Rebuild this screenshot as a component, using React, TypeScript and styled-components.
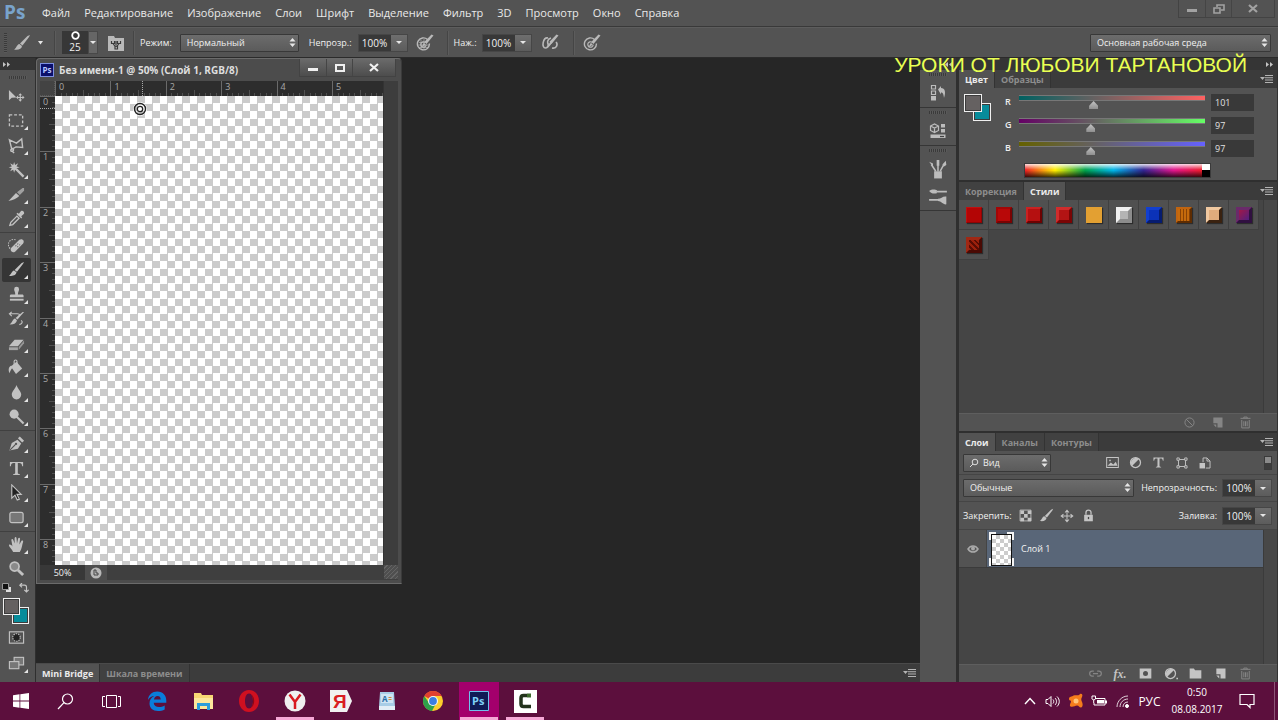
import React, { useState } from "react";
import styled, { createGlobalStyle } from "styled-components";

const GlobalStyle = createGlobalStyle`
  * { box-sizing: border-box; }
  body { margin: 0; background: #262626; }
  button, input, select { font: inherit; color: inherit; margin: 0; padding: 0; }
  button { background: none; border: 0; cursor: default; }
`;

const uiFont = `"Open Sans", "Noto Sans", sans-serif`;

/* ---------- shell ---------- */

const Screen = styled.div`
  position: relative;
  display: flex;
  flex-direction: column;
  min-height: 100vh;
  font-family: ${uiFont};
  font-size: 9px;
  color: #e2e2e2;
  background: #535353;
  overflow: hidden;
`;

const MenuBar = styled.header`
  display: flex;
  height: 27px;
  padding-right: 3px;
  background: #535353;
  border-bottom: 1px solid #393939;
`;

const Logo = styled.div`
  width: 35px;
  padding-left: 4px;
  font: bold 19px/25px "Open Sans", sans-serif;
  color: #79a3cb;
`;

const MenuNav = styled.nav`
  display: flex;
  flex: 1;
`;

const MenuItem = styled.button`
  padding: 0 7px;
  font-size: 11px;
  line-height: 26px;
  color: #e9e9e9;
`;

const WindowButtons = styled.div`
  display: flex;
  align-self: flex-start;
  border: 1px solid #434343;
  border-top: 0;
`;

const WindowButton = styled.button<{ $wide?: boolean; $raised?: boolean }>`
  display: grid;
  place-items: center;
  width: ${(p) => (p.$wide ? 43 : 26)}px;
  height: 17px;
  color: ${(p) => (p.$raised ? "#f0f0f0" : "#a2a2a2")};
  background: ${(p) => (p.$raised ? "linear-gradient(#6a6a6a, #4d4d4d)" : "none")};
  & + & { border-left: 1px solid #454545; }
`;

const OptionsBar = styled.div`
  display: flex;
  align-items: center;
  height: 31px;
  padding: 0 7px 0 4px;
  border-top: 1px solid #5d5d5d;
  border-bottom: 1px solid #2b2b2b;
`;

const Grip = styled.div<{ $vertical?: boolean; $length: number }>`
  flex: none;
  width: ${(p) => (p.$vertical ? 3 : p.$length)}px;
  height: ${(p) => (p.$vertical ? p.$length : 3)}px;
  background: repeating-linear-gradient(${(p) => (p.$vertical ? "180deg" : "90deg")}, #3a3a3a 0 1px, #5a5a5a 1px 2px);
`;

const Divider = styled.div`
  width: 2px;
  height: 24px;
  margin: 0 5px;
  background: #454545;
  border-right: 1px solid #5c5c5c;
`;

const BarButton = styled.button<{ $width?: number }>`
  display: grid;
  place-items: center;
  width: ${(p) => p.$width ?? 24}px;
  height: 24px;
  color: #b9b9b9;
`;

const BrushPreset = styled.button`
  display: flex;
  width: 36px;
  height: 23px;
  margin: 0 6px 0 1px;
  background: #373737;
  color: #f0f0f0;
  font-size: 10px;
  line-height: 10px;
`;

const BrushFace = styled.span`
  display: flex;
  flex: 1;
  flex-direction: column;
  align-items: center;
  gap: 2px;
`;

const ArrowCap = styled.span`
  display: grid;
  place-items: center;
  width: 10px;
  height: 100%;
  background: #666;
  border: 1px solid #484848;
`;

const Spacer = styled.div`
  flex: 1;
`;

const FieldLabel = styled.label<{ $before?: number; $gap?: number }>`
  margin-left: ${(p) => p.$before ?? 0}px;
  margin-right: ${(p) => p.$gap ?? 6}px;
  font-weight: 500;
  line-height: 14px;
  color: #f0f0f0;
  white-space: nowrap;
`;

const SelectShell = styled.div<{ $width?: number; $grow?: boolean; $icon?: boolean }>`
  position: relative;
  flex: ${(p) => (p.$grow ? "1 1 0" : "none")};
  width: ${(p) => (p.$width ? p.$width + "px" : "auto")};
  height: 18px;
  select {
    width: 100%;
    height: 18px;
    appearance: none;
    padding-left: ${(p) => (p.$icon ? 19 : 6)}px;
    color: #f0f0f0;
    background: linear-gradient(#6c6c6c, #5b5b5b);
    border: 1px solid #383838;
    border-radius: 1px;
    font-size: 9px;
    font-weight: 500;
    line-height: 14px;
  }
  svg { position: absolute; pointer-events: none; }
  .arrows { right: 3px; top: 4px; }
  .lens { left: 6px; top: 4px; }
`;

const NumberShell = styled.div`
  display: flex;
  flex: none;
  height: 18px;
  border: 1px solid #464646;
  input {
    width: 32px;
    border: 0;
    background: #383838;
    color: #f2f2f2;
    font-size: 10px;
    text-align: center;
  }
  button {
    display: grid;
    place-items: center;
    width: 16px;
    background: linear-gradient(#6e6e6e, #5c5c5c);
    color: #eee;
  }
`;

const Body = styled.div`
  display: flex;
  flex: 1;
  min-height: 620px;
  background: #2f2f2f;
`;

/* ---------- tools ---------- */

const Strip = styled.aside<{ $width: number }>`
  display: flex;
  flex: none;
  flex-direction: column;
  width: ${(p) => p.$width}px;
  background: #535353;
`;

const StripHead = styled.div<{ $end?: boolean }>`
  display: flex;
  align-items: center;
  justify-content: ${(p) => (p.$end ? "flex-end" : "flex-start")};
  height: 12px;
  padding: 0 4px 0 3px;
  background: #353535;
  color: #b8b8b8;
`;

const GripRow = styled.div<{ $height: number }>`
  display: grid;
  place-items: center;
  height: ${(p) => p.$height}px;
`;

const ToolGroup = styled.div<{ $height: number }>`
  display: flex;
  flex-direction: column;
  height: ${(p) => p.$height}px;
  & + & {
    margin-top: 2px;
    box-shadow: 0 -1px 0 #404040;
  }
`;

const Tool = styled.button<{ $active?: boolean }>`
  position: relative;
  display: grid;
  place-items: center;
  flex: 1;
  width: 29px;
  margin-left: 2px;
  color: #c2c2c2;
  border-radius: 2px;
  background: ${(p) => (p.$active ? "#353535" : "none")};
`;

const Corner = styled.i`
  position: absolute;
  right: 3px;
  bottom: 3px;
  border: 2px solid transparent;
  border-right-color: #e4e4e4;
  border-bottom-color: #e4e4e4;
`;

const SwapRow = styled.div`
  display: flex;
  justify-content: space-between;
  height: 16px;
  padding: 2px 6px 0 2px;
`;

const SwatchPair = styled.div<{ $size: number; $w: number; $h: number }>`
  position: relative;
  width: ${(p) => p.$w}px;
  height: ${(p) => p.$h}px;
  button {
    position: absolute;
    width: ${(p) => p.$size}px;
    height: ${(p) => p.$size}px;
    border: 1px solid #f0f0f0;
    outline: 1px solid #3c3c3c;
    outline-offset: -2px;
  }
  .back { right: 0; bottom: 0; background: #078c9b; }
  .front { left: 0; top: 0; background: #656161; }
`;

const ToolSwatches = styled.div`
  padding: 1px 0 0 3px;
`;

/* ---------- workspace ---------- */

const Work = styled.main`
  position: relative;
  display: flex;
  flex: 1;
  flex-direction: column;
  min-width: 0;
  margin-left: 1px;
  background: #262626;
`;

const Stage = styled.div`
  flex: 1;
`;

const BottomTabs = styled.div`
  display: flex;
  height: 19px;
  background: #3c3c3c;
  border-top: 1px solid #4a4a4a;
`;

const DocWindow = styled.section`
  position: absolute;
  left: 0;
  top: 0;
  width: 366px;
  padding: 0 3px 3px;
  border: 1px solid #6b6b6b;
  border-right-color: #3a3a3a;
  border-radius: 4px 4px 0 0;
  background: #4c4c4c;
`;

const DocTitle = styled.div`
  display: flex;
  height: 22px;
  padding-right: 2px;
  font-size: 10px;
  font-weight: bold;
  line-height: 22px;
  color: #dedede;
  white-space: nowrap;
`;

const DocBadge = styled.span`
  width: 14px;
  height: 14px;
  margin: 4px 5px 0 0;
  border: 1px solid #7d8fe0;
  background: #0a0f6b;
  color: #b9c8ff;
  font: bold 8px/12px ${uiFont};
  text-align: center;
`;

const DocGrid = styled.div`
  display: grid;
  grid-template-columns: 15px 328px 1fr;
  grid-template-rows: 15px 469px 15px;
  background: #2d2d2d;
`;

const RulerCorner = styled.div`
  background: #434343;
  border-right: 1px dotted #5a5a5a;
  border-bottom: 1px dotted #5a5a5a;
`;

const ScrollTrack = styled.div`
  background: #3d3d3d;
  border-left: 1px solid #333;
`;

const Canvas = styled.div`
  position: relative;
  background: repeating-conic-gradient(#cbcbcb 0 25%, #ffffff 0 50%) 0 0 / 15px 15px;
  svg { position: absolute; left: 78px; top: 6px; }
`;

const DocStatus = styled.div`
  display: flex;
  grid-column: 1 / -1;
  background: #3f3f3f;
  color: #f0f0f0;
  line-height: 15px;
`;

const Zoom = styled.input`
  width: 45px;
  border: 0;
  background: #383838;
  font-weight: 500;
  text-align: center;
`;

const StatusButton = styled.button`
  display: grid;
  place-items: center;
  width: 22px;
  background: #4e4e4e;
`;

const ResizeCorner = styled.div`
  width: 14px;
  height: 14px;
  background: repeating-linear-gradient(135deg, #4f4f4f 0 2px, #656565 2px 3px);
`;

/* ---------- docks ---------- */

const DockGroup = styled.div<{ $height: number }>`
  display: flex;
  flex-direction: column;
  align-items: center;
  height: ${(p) => p.$height}px;
  border-bottom: 1px solid #363636;
`;

const DockButton = styled.button`
  display: grid;
  place-items: center;
  width: 30px;
  height: 27px;
  color: #bcbcbc;
`;

const Panels = styled.aside`
  display: flex;
  flex: none;
  flex-direction: column;
  width: 319px;
  margin-left: 3px;
  border-right: 1px solid #333;
  background: #2f2f2f;
`;

const PanelGap = styled.div`
  height: 2px;
`;

const TabRow = styled.div`
  display: flex;
  height: 18px;
  background: #3b3b3b;
`;

const Tab = styled.button<{ $active?: boolean }>`
  padding: 0 6px;
  font-size: 9px;
  font-weight: bold;
  line-height: 17px;
  color: ${(p) => (p.$active ? "#ebebeb" : "#8d8d8d")};
  background: ${(p) => (p.$active ? "#535353" : "#414141")};
  border-right: 1px solid #333;
  white-space: nowrap;
`;

const PanelMenu = styled.button`
  display: grid;
  place-items: center;
  width: 22px;
  margin-left: auto;
  color: #cfcfcf;
`;

const ColorPanel = styled.div`
  display: grid;
  grid-template-columns: 41px 1fr;
  height: 92px;
  padding: 6px 0 0 5px;
  background: #535353;
`;

const Channels = styled.div`
  display: flex;
  flex-direction: column;
  gap: 7px;
`;

const Channel = styled.div`
  display: flex;
  height: 16px;
  label { width: 10px; line-height: 16px; color: #eee; font-weight: 600; }
  input[type="text"] {
    width: 43px;
    height: 17px;
    margin-left: 6px;
    padding-left: 4px;
    border: 0;
    background: #393939;
    font-weight: 500;
  }
`;

const Slider = styled.input<{ $from: string; $to: string }>`
  appearance: none;
  width: 186px;
  height: 16px;
  background: none;
  &::-webkit-slider-runnable-track {
    height: 16px;
    background: linear-gradient(90deg, ${(p) => p.$from}, #656161 40%, ${(p) => p.$to}) 0 2px / 100% 4px no-repeat,
      linear-gradient(#777, #777) 0 1px / 100% 6px no-repeat;
  }
  &::-webkit-slider-thumb {
    appearance: none;
    width: 9px;
    height: 8px;
    margin-top: 7px;
    background: linear-gradient(#c4c4c4, #8f8f8f);
    clip-path: polygon(50% 0, 100% 60%, 100% 100%, 0 100%, 0 60%);
  }
`;

const SliderSlot = styled.div`
  width: 186px;
  margin-left: 4px;
`;

const Spectrum = styled.div`
  display: flex;
  width: 187px;
  height: 15px;
  margin-left: 19px;
  border: 1px solid #3b3b3b;
`;

const Hues = styled.div`
  flex: 1;
  background: linear-gradient(rgba(255, 255, 255, 0.85), rgba(255, 255, 255, 0) 45%, rgba(0, 0, 0, 0) 50%, rgba(0, 0, 0, 0.75)),
    linear-gradient(90deg, #ee2024, #ffee00 17%, #00a14b 34%, #00b4e8 50%, #32248f 67%, #e0168c 84%, #ee1c2c);
`;

const BlackWhite = styled.div`
  width: 8px;
  background: linear-gradient(#fff 50%, #000 0);
`;

const StylesPanel = styled.div`
  display: flex;
  flex: 1 1 200px;
  min-height: 0;
  background: #454545;
`;

const StyleGrid = styled.div`
  display: grid;
  flex: 1;
  grid-template-columns: repeat(10, 30px);
  grid-auto-rows: 30px;
  align-content: start;
`;

const StyleCell = styled.button`
  display: grid;
  place-items: center;
  background: #505050;
  border-right: 1px solid #404040;
  border-bottom: 1px solid #404040;
`;

const StyleChip = styled.span<{ $fill: string; $hi: string; $lo: string; $bevel: number }>`
  width: 16px;
  height: 16px;
  border: ${(p) => p.$bevel}px solid;
  border-color: ${(p) => `${p.$hi} ${p.$lo} ${p.$lo} ${p.$hi}`};
  background: ${(p) => p.$fill};
  box-shadow: 1px 1px 1px rgba(0, 0, 0, 0.45);
`;

const ScrollStrip = styled.div`
  width: 14px;
  background: #484848;
  border-left: 1px solid #3b3b3b;
`;

const PanelFoot = styled.div<{ $gap: number }>`
  display: flex;
  align-items: center;
  justify-content: flex-end;
  gap: ${(p) => p.$gap}px;
  height: 18px;
  padding-right: 24px;
  border-top: 1px solid #5e5e5e;
  background: #535353;
`;

const FootButton = styled.button<{ $dim?: boolean }>`
  display: grid;
  place-items: center;
  width: 16px;
  height: 16px;
  color: ${(p) => (p.$dim ? "#858585" : "#c4c4c4")};
  font: italic bold 12px/16px "Liberation Serif", serif;
`;

const Row = styled.div<{ $height: number }>`
  display: flex;
  align-items: center;
  height: ${(p) => p.$height}px;
  padding: 0 5px 0 4px;
  background: #535353;
  border-bottom: 1px solid #454545;
`;

const FilterButtons = styled.div<{ $start: number }>`
  display: flex;
  margin-left: ${(p) => p.$start}px;
`;

const SmallButton = styled.button<{ $width: number }>`
  display: grid;
  place-items: center;
  width: ${(p) => p.$width}px;
  height: 18px;
  color: #c4c4c4;
`;

const FilterSwitch = styled.button`
  width: 8px;
  height: 14px;
  border: 1px solid #3a3a3a;
  background: linear-gradient(#8a8a8a 50%, #3c3c3c 0);
`;

const Layers = styled.div`
  display: flex;
  flex: 1 1 121px;
  min-height: 0;
  background: #454545;
`;

const LayerList = styled.div`
  flex: 1;
`;

const LayerRow = styled.div`
  display: flex;
  height: 38px;
  border-bottom: 1px solid #3b3b3b;
`;

const EyeButton = styled.button`
  display: grid;
  place-items: center;
  width: 28px;
  background: #535353;
  border-right: 1px solid #444;
  color: #a9a9a9;
`;

const LayerBody = styled.button`
  display: flex;
  flex: 1;
  align-items: center;
  gap: 7px;
  padding-left: 2px;
  background: #596678;
  color: #f2f2f2;
  font-weight: 500;
`;

const LayerThumb = styled.span`
  position: relative;
  display: block;
  width: 25px;
  height: 34px;
  padding: 2px;
  background:
    linear-gradient(#596678, #596678) 50% 0 / 11px 100% no-repeat,
    linear-gradient(#596678, #596678) 0 50% / 100% 18px no-repeat,
    #f5f5f5;
  &::before {
    content: "";
    display: block;
    height: 30px;
    border: 1px solid #111;
    background: repeating-conic-gradient(#ccc 0 25%, #fff 0 50%) 0 0 / 8px 8px;
  }
`;

/* ---------- caption & taskbar ---------- */

const Caption = styled.div`
  position: absolute;
  right: 31px;
  top: 53px;
  font: 21px/24px "Liberation Sans", sans-serif;
  color: #e9ff52;
  white-space: nowrap;
`;

const Taskbar = styled.footer`
  display: flex;
  height: 38px;
  background: #5c0f3d;
  color: #fff;
`;

const TaskButton = styled.button<{ $first?: boolean; $running?: boolean; $active?: boolean }>`
  display: grid;
  place-items: center;
  width: ${(p) => (p.$first ? 42 : 46)}px;
  background:
    linear-gradient(${(p) => (p.$running ? "#f5a8d6, #f5a8d6" : "transparent, transparent")}) 50% 100% / 38px 3px no-repeat,
    linear-gradient(${(p) => (p.$active ? "#a3006c, #a3006c" : "transparent, transparent")}) 50% 0 / 40px 100% no-repeat;
`;

const Tray = styled.div`
  display: flex;
  align-items: center;
  margin-left: auto;
  padding-right: 3px;
`;

const TrayButton = styled.button<{ $width: number }>`
  display: grid;
  place-items: center;
  width: ${(p) => p.$width}px;
  height: 38px;
  font-size: 12px;
`;

const Clock = styled.button`
  width: 64px;
  font-size: 10px;
  line-height: 17px;
  text-align: center;
`;

const DesktopEdge = styled.div`
  align-self: stretch;
  width: 1px;
  background: #8d5577;
`;

/* ---------- drawings ---------- */

const Icon = ({ children, size = 18, box = 18 }: { children: React.ReactNode; size?: number; box?: number }) => (
  <svg width={size} height={size} viewBox={`0 0 ${box} ${box}`} fill="none" stroke="currentColor" strokeWidth="1.2" aria-hidden="true">
    {children}
  </svg>
);
const F = { fill: "currentColor", stroke: "none" };

const brushShape = (
  <g {...F}>
    <path d="M17 1 16 3 9.500 11.500 7 9.500 14.500 2z" />
    <path d="M6.400 10 9 12c-.3 3-3.500 4.300-8 3.600C3.500 14.500 3.600 10.600 6.400 10z" />
  </g>
);
const thinBrush = <g {...F}><path d="M17.500 1.500 10.500 10 8.300 8 15.500 .5z" /><path d="M7.800 8.800 9.800 10.800 5.500 13.200z" /></g>;

const Caret = () => <svg width="6" height="3" viewBox="0 0 6 3" aria-hidden="true"><path d="M0 0h6L3 3z" fill="#e6e6e6" /></svg>;
const Arrows = () => <svg className="arrows" width="7" height="9" viewBox="0 0 7 9" aria-hidden="true"><path d="M3.500 0 6.500 3.500h-6zM3.500 9l3-3.500h-6z" fill="#e6e6e6" /></svg>;
const Chevrons = ({ flip }: { flip?: boolean }) => (
  <svg width="7" height="5" viewBox="0 0 7 5" aria-hidden="true"><path d={flip ? "M3 0v5L0 2.500zM7 0v5L4 2.500z" : "M0 0v5l3-2.500zM4 0v5l3-2.500z"} fill="#c4c4c4" /></svg>
);
const MenuGlyph = () => (
  <svg width="13" height="8" viewBox="0 0 13 8" aria-hidden="true"><path d="M0 2h5L2.500 5zM5 0h8v1H5zM5 2.300h8v1H5zM5 4.600h8v1H5zM5 7h8v1H5z" fill="#b4b4b4" /></svg>
);

const toolIcons: Record<string, React.ReactNode> = {
  move: <g {...F}><path d="M1 2v11l3-2.600L9 10z" /><path d="m13 5.500 2 2.200h-1.400V9.400h1.700V8l2.200 2-2.200 2v-1.400h-1.700v1.700H15l-2 2.200-2-2.200h1.400v-1.700h-1.700V12L8.500 10l2.200-2v1.400h1.700V7.700H11z" /></g>,
  marquee: <rect x="1.500" y="3" width="14" height="12" strokeDasharray="3 2" strokeWidth="1.400" />,
  lasso: <path d="M1.500 3 9 6.500 14.500 2l1 9-7-.5-4.500 2.500z M4 12.500c-2 1-1 3.500 1 2.300s0-3-1-2.300zM4.500 15l2 2" strokeWidth="1.500" />,
  wand: <g><path d="m8.500 8.500 8 8" strokeWidth="2.500" /><path d="m6.500 1 1 3.300L10.700 2.500 9 5.700l3.300 1L9 7.700l1.700 3.200L7.500 9.200l-1 3.300-1-3.300-3.200 1.700L4 7.700l-3.300-1L4 5.700 2.300 2.500l3.200 1.800z" {...F} /></g>,
  slice: <g {...F}><path d="M.5 16 8.500 7.500l3.500 3C9 13 5 15 .5 16z" /><path d="m9.500 6.500 6-4.500h1.500v3L12.500 9.500z" opacity=".7" /></g>,
  dropper: <g><path d="M2 16.200 3 13l6.500-6.500 2.200 2.200L5 15.400z" strokeWidth="1.400" /><path d="m9 4 5 5 1-1-1-1.500L17 4c.7-2-1.300-4-3.200-3L11.500 4 10 3z" {...F} /></g>,
  heal: <g><path d="M8 3a5.500 5.500 0 1 0-3 10.500" strokeDasharray="1.500 1.200" /><path d="M3.500 11.500 12 3c3-2 6 1 4 4l-8.500 8.500c-3 2-6-1-4-4z" {...F} /><path d="m8 9 .7.7M10 7l.7.7M10 10l.7.7M12 8l.7.7" stroke="#535353" /></g>,
  brush: brushShape,
  stamp: <g {...F}><path d="M6.500 3.500a2.600 2.600 0 0 1 5.200 0c0 2-1.200 2.500-1.200 5.500H15c1 0 1.500.6 1.500 1.500V12H2v-1.500C2 9.600 2.500 9 3.500 9h4.200c0-3-1.200-3.500-1.200-5.500z" /><path d="M2 13.500h14.500V15.500H2z" /></g>,
  history: <g><path d="M2 4h8M4 2 1.500 4 4 6.500M10 4c3 0 3 2 .5 3M14 11c2 1.500 1 3.500-2 4.500" /><path d="m17 2-7 8-2-1.600L15.500 2z" {...F} /><path d="m7.500 9 2 1.800C9 14 6 15.500 1.500 15.200 5 13.500 4.500 9.500 7.500 9z" {...F} /></g>,
  eraser: <g {...F}><path d="M1 12 7 5h9.500l-6 7z" /><path d="M1 13h9.500v3H1z" opacity=".75" /><path d="m11.300 12.800 5.700-7v3L11.300 16z" opacity=".6" /></g>,
  bucket: <g><path d="m3 8 6-5 6 7-6.500 6z" {...F} /><path d="M6.500 7V2.500c0-2 3-2 3 0V6" /><path d="M3.500 7C0 9 .5 12 1.500 15c1-2 1.500-4 3-5.500z" {...F} /></g>,
  blur: <path d="M9 1c1 4 5 6.500 5 10.200A5 5 0 0 1 9 16.300a5 5 0 0 1-5-5.100C4 7.500 8 5 9 1z" {...F} />,
  dodge: <g><circle cx="6.500" cy="6.500" r="4.800" {...F} /><path d="m9.500 9.500 7 7" strokeWidth="2.200" /></g>,
  pen: <g><path d="M1.500 16.500 4 8.500l6-3.500 4 4-3.500 5.500z" {...F} /><path d="m10.500 3.500 2-2 4.500 4.500-2 2z" {...F} /><path d="m2 16 6-6" stroke="#535353" /><circle cx="8.500" cy="9.500" r="1.200" fill="#535353" stroke="none" /></g>,
  type: <path d="M2 2h14v4.500h-1C14.600 4 14 3.300 12 3.300h-1.600v10.200c0 1.200.6 1.400 2.200 1.600V16H5.400v-.9c1.600-.2 2.200-.4 2.200-1.600V3.300H6C4 3.300 3.400 4 3 6.500H2z" {...F} />,
  arrow: <path d="M4 1v14l3.400-3.200L9.800 17l2.200-1-2.500-5H14z" fill="#222" strokeWidth="1.200" />,
  shape: <rect x="2" y="3.500" width="14" height="11" rx="2" fill="#777" strokeWidth="1.300" />,
  hand: <path d="M5.500 17C4 13.500 1 11.500 1 9.500c1-1 2.500 0 3.700 1.500L3.500 4c.6-1.300 1.700-1 2 0L7 8V2c.5-1.300 1.700-1.300 2 0l.5 6 1.300-5.500c.6-1.200 1.800-.8 2 .3L12 9l2.300-4c1-.8 2 0 1.700 1-1 3-1.200 7.500-3.500 11z" {...F} />,
  zoom: <g><circle cx="7" cy="7" r="4.700" fill="#8a8a8a" strokeWidth="1.800" /><path d="m10.500 10.500 5.500 5.500" strokeWidth="3" /></g>,
};

const toolGroups: { height: number; tools: [string, string][] }[] = [
  { height: 147, tools: [["move", "Перемещение"], ["marquee", "Область"], ["lasso", "Лассо"], ["wand", "Волшебная палочка"], ["slice", "Раскройка"], ["dropper", "Пипетка"]] },
  { height: 196, tools: [["heal", "Восстанавливающая кисть"], ["brush", "Кисть"], ["stamp", "Штамп"], ["history", "Архивная кисть"], ["eraser", "Ластик"], ["bucket", "Заливка"], ["blur", "Размытие"], ["dodge", "Осветлитель"]] },
  { height: 99, tools: [["pen", "Перо"], ["type", "Текст"], ["arrow", "Выделение контура"], ["shape", "Фигура"]] },
  { height: 49, tools: [["hand", "Рука"], ["zoom", "Масштаб"]] },
];

const trashIcon = <path d="M4.500 6v9.500h9V6M3 4h12M7 4V2.500h4V4M7 7.500v6M9 7.500v6M11 7.500v6" />;
const newIcon = <g {...F}><path d="M4 3h11v12h-6v-5H4z" /><path d="M4 11.500h3.500V15z" /></g>;
const circleHalf = <g><circle cx="9" cy="9" r="6" strokeWidth="1.500" /><path d="M4.800 13.200A6 6 0 0 1 13.200 4.800z" {...F} /></g>;
const targetPen = <g><path d="M11.500 5.500A6 6 0 1 0 13.400 9.500" strokeWidth="1.400" /><path d="M9 8.200a2.700 2.700 0 1 0 1.200 2.500" />{thinBrush}</g>;

const MinGlyph = () => <svg width="10" height="9" viewBox="0 0 10 9" aria-hidden="true"><path d="M0 5h10v3H0z" fill="currentColor" /></svg>;
const MaxGlyph = () => <svg width="10" height="8" viewBox="0 0 10 8" aria-hidden="true"><path d="M1 1h8v6H1z" fill="none" stroke="currentColor" strokeWidth="2" /></svg>;
const RestoreGlyph = () => <svg width="12" height="10" viewBox="0 0 12 10" aria-hidden="true"><path d="M4 3V1h7v5H8M1 4h6v5H1z" fill="none" stroke="currentColor" strokeWidth="1.600" /></svg>;
const CloseGlyph = () => <svg width="10" height="9" viewBox="0 0 10 9" aria-hidden="true"><path d="m1 1 8 7M9 1 1 8" stroke="currentColor" strokeWidth="2.200" /></svg>;

const UNIT = 55.4;

const Ruler = ({ vertical, length }: { vertical?: boolean; length: number }) => {
  const ticks = Array.from({ length: Math.floor((length / UNIT) * 10) + 1 }, (_, i) => i);
  const labels = Array.from({ length: Math.floor(length / UNIT) + 1 }, (_, i) => i);
  return (
    <svg width={vertical ? 15 : length} height={vertical ? length : 15} shapeRendering="crispEdges" aria-hidden="true">
      {ticks.map((i) => {
        const at = Math.round((i * UNIT) / 10) + 0.5;
        const size = i % 10 === 0 ? 15 : i % 5 === 0 ? 6 : 3;
        const d = vertical ? `M${15 - size} ${at}H15` : `M${at} ${15 - size}V15`;
        return <path key={i} d={d} stroke={i % 10 === 0 ? "#6a6a6a" : "#505050"} />;
      })}
      <path d={vertical ? "M0 12.500H15" : "M87.500 0V15"} stroke="#aaa" strokeDasharray="1 1" />
      {labels.map((n) => (
        <text key={n} x={vertical ? 3 : n * UNIT + 4} y={vertical ? n * UNIT + 9 : 9} fontSize="9" fill="#a9a9a9">{n}</text>
      ))}
    </svg>
  );
};

/* ---------- controls ---------- */

const Select = ({ id, label, value, width, grow, lens }: { id: string; label: string; value: string; width?: number; grow?: boolean; lens?: boolean }) => (
  <SelectShell $width={width} $grow={grow} $icon={lens}>
    <select id={id} aria-label={label} defaultValue={value}><option>{value}</option></select>
    {lens && <svg className="lens" width="10" height="10" viewBox="0 0 10 10" aria-hidden="true"><circle cx="6" cy="4" r="2.800" fill="none" stroke="#ddd" /><path d="M4 6 1 9" stroke="#ddd" /></svg>}
    <Arrows />
  </SelectShell>
);

const Percent = ({ id, label }: { id: string; label: string }) => (
  <NumberShell>
    <input id={id} type="text" defaultValue="100%" />
    <button aria-label={label}><Caret /></button>
  </NumberShell>
);

const ColorChannel = ({ name, initial, from, to }: { name: string; initial: number; from: string; to: string }) => {
  const [value, setValue] = useState(initial);
  const update = (e: React.ChangeEvent<HTMLInputElement>) => setValue(Number(e.target.value) || 0);
  return (
    <Channel>
      <label htmlFor={`channel-${name}`}>{name}</label>
      <SliderSlot>
        <Slider type="range" min={0} max={255} value={value} onChange={update} aria-label={`Ползунок ${name}`} $from={from} $to={to} />
      </SliderSlot>
      <input id={`channel-${name}`} type="text" value={value} onChange={update} />
    </Channel>
  );
};

const Tabs = ({ items, active }: { items: string[]; active: string }) => (
  <TabRow role="tablist">
    {items.map((t) => <Tab key={t} role="tab" aria-selected={t === active} $active={t === active}>{t}</Tab>)}
    <PanelMenu aria-label="Меню панели"><MenuGlyph /></PanelMenu>
  </TabRow>
);

const menus = ["Файл", "Редактирование", "Изображение", "Слои", "Шрифт", "Выделение", "Фильтр", "3D", "Просмотр", "Окно", "Справка"];

const chips: [string, string, string, number][] = [
  ["#b30505", "#c01010", "#8f0404", 1],
  ["#b80808", "#a30606", "#7a0303", 2],
  ["#b51010", "#c92222", "#6d0202", 2],
  ["#b31414", "#d02c2c", "#7a0505", 3],
  ["#e3a032", "#e3a032", "#e3a032", 1],
  ["#b4b4b4", "#f0f0f0", "#8c8c8c", 4],
  ["#0b32b8", "#123fd0", "#061c70", 3],
  ["repeating-linear-gradient(90deg,#c56a0c 0 2px,#8a4205 2px 3px)", "#c06410", "#5e2c02", 2],
  ["#e0ac7c", "#f0c8a0", "#3a2210", 3],
  ["linear-gradient(135deg,#a01848,#502080)", "#6a2a6a", "#301040", 3],
  ["repeating-linear-gradient(45deg,#9c200c 0 2px,#5a0c04 2px 4px)", "#a02814", "#4a0a04", 3],
];

const taskIcons: { name: string; running?: boolean; active?: boolean; art: React.ReactNode }[] = [
  { name: "Пуск", art: <svg width="16" height="16" viewBox="0 0 16 16"><path d="M0 2.200 6.500 1.300v6.200H0zM7.300 1.200 16 0v7.500H7.300zM0 8.400h6.500v6.300L0 13.800zM7.300 8.400H16V16l-8.700-1.200z" fill="#fff" /></svg> },
  { name: "Поиск", art: <svg width="17" height="17" viewBox="0 0 17 17" fill="none" stroke="#fff" strokeWidth="1.200"><circle cx="10.500" cy="6" r="5" /><path d="m7 9.700-6 6.300" /></svg> },
  { name: "Представление задач", art: <svg width="19" height="15" viewBox="0 0 19 15" fill="none" stroke="#fff"><path d="M4.500 1.500h10v12h-10zM3 2.500H.5v10H3M16 2.500h2.500v10H16" /></svg> },
  { name: "Edge", art: <svg width="20" height="20" viewBox="0 0 20 20"><path d="M1 9C1.500 3.500 5.300.5 10.300.5c5.700 0 9 4 9 9.200v2H6.700c.2 3 2.500 4.200 5.200 4.200 2.200 0 4-.5 5.800-1.500v4c-2 1.200-4.200 1.600-6.700 1.600-5.300 0-8.500-3-8.500-7.500 0-3.500 1.700-6 4.800-7.400C4.800 5.300 2.500 6.500 1 9zm6-.6h6.700C13.600 6.200 12.500 5 10.500 5 8.600 5 7.300 6.300 7 8.400z" fill="#0a7ddb" /></svg> },
  { name: "Проводник", art: <svg width="21" height="19" viewBox="0 0 21 19"><path d="M1 1h7l1 2h11v14H1z" fill="#f7d774" /><path d="M1 6h19v11H1z" fill="#fce79c" /><path d="M4 11h13v7h-3v-4H7v4H4z" fill="#2a9ddb" /></svg> },
  { name: "Opera", art: <svg width="22" height="22" viewBox="0 0 22 22"><path fillRule="evenodd" d="M11 0C17 0 21 5 21 11s-4 11-10 11S1 17 1 11 5 0 11 0zm0 3.500c-2.600 0-4 3.500-4 7.500s1.400 7.500 4 7.500 4-3.500 4-7.500-1.400-7.500-4-7.500z" fill="#cf1020" /><path d="M11 3.500c2.600 0 4 3.500 4 7.500s-1.400 7.500-4 7.500c7-1 7-14 0-15z" fill="#8c0614" /></svg> },
  { name: "Яндекс.Браузер", running: true, art: <svg width="22" height="22" viewBox="0 0 22 22"><circle cx="11" cy="11" r="10.500" fill="#efefef" /><path d="m5.500 4.500 5.500 7.500 5.500-7.500M11 11v8" fill="none" stroke="#d8191f" strokeWidth="2.500" /></svg> },
  { name: "Яндекс", art: <svg width="22" height="22" viewBox="0 0 22 22"><path d="M0 0h17l5 11-5 11H0z" fill="#f1f1f1" /><text x="3" y="18" fontSize="19" fontWeight="bold" fontFamily="Liberation Sans" fill="#d91d22">Я</text></svg> },
  { name: "WordPad", art: <svg width="18" height="20" viewBox="0 0 18 20"><path d="M2 1h14l1 15H1z" fill="#a8cde6" /><path d="M3 3h12v9H3z" fill="#cfe4f3" /><path d="M1 15h16v4H1z" fill="#e3eef6" /><text x="4" y="11" fontSize="8" fontWeight="bold" fill="#2a6fa8">A</text><path d="M10.500 6.500h3M10.500 8.500h3" stroke="#d08a3a" /></svg> },
  { name: "Chrome", art: <svg width="22" height="22" viewBox="0 0 22 22"><circle cx="11" cy="11" r="10" fill="#fccd2c" /><path d="M11 11 2.300 6A10 10 0 0 1 19.700 6H11z" fill="#e1402f" /><path d="M2.300 6A10 10 0 0 0 10 21l4.500-8.500-7.500.5z" fill="#2fa04b" /><circle cx="11" cy="11" r="5" fill="#f6f6f6" /><circle cx="11" cy="11" r="3.900" fill="#3b7de0" /></svg> },
  { name: "Photoshop", running: true, active: true, art: <svg width="20" height="20" viewBox="0 0 20 20"><path d="M.5.5h19v19H.5z" fill="#101a55" stroke="#6fc0ee" /><text x="3" y="14" fontSize="11" fontWeight="bold" fill="#7fd0f8">Ps</text></svg> },
  { name: "Camtasia", running: true, art: <svg width="23" height="23" viewBox="0 0 23 23"><path d="M0 0h23v23H0z" fill="#fff" /><path d="M17 5.500H9.500C7.500 5.500 7 6.500 7 8v6c0 1.500.5 2.500 2.500 2.500H17" fill="none" stroke="#23331c" strokeWidth="3.500" /><path d="M17 3.700h-4V7.300h4z" fill="#3d6b2c" /></svg> },
];

export default function App() {
  return (
    <>
      <GlobalStyle />
      <Screen>
        <MenuBar>
          <Logo>Ps</Logo>
          <MenuNav aria-label="Главное меню">{menus.map((m) => <MenuItem key={m}>{m}</MenuItem>)}</MenuNav>
          <WindowButtons>
            <WindowButton aria-label="Свернуть"><MinGlyph /></WindowButton>
            <WindowButton aria-label="Восстановить"><RestoreGlyph /></WindowButton>
            <WindowButton aria-label="Закрыть" $wide><CloseGlyph /></WindowButton>
          </WindowButtons>
        </MenuBar>

        <OptionsBar>
          <Grip $vertical $length={20} />
          <BarButton $width={42} aria-label="Кисть">
            <svg width="30" height="18" viewBox="0 0 30 18" fill="none" aria-hidden="true">{brushShape}<path d="M25 7h5l-2.500 3.500z" fill="#e6e6e6" /></svg>
          </BarButton>
          <Divider />
          <BrushPreset aria-label="Набор кистей">
            <BrushFace>
              <svg width="9" height="9" viewBox="0 0 9 9" aria-hidden="true"><circle cx="4.500" cy="4.500" r="3.300" fill="none" stroke="#fff" strokeWidth="1.800" /></svg>
              25
            </BrushFace>
            <ArrowCap><Caret /></ArrowCap>
          </BrushPreset>
          <BarButton aria-label="Панель кистей">
            <Icon><path d="M1 2h6l1 2h9v13H1z" {...F} /><path d="M4.500 7v2.500h3V7M6 9.500l2.500 3.500M9 7v4M13.500 7v2.500h-3V7M12 9.500 9.500 13M8 12h2.500v3H8z" stroke="#3a3a3a" /></Icon>
          </BarButton>
          <Divider />
          <FieldLabel htmlFor="mode" $gap={8}>Режим:</FieldLabel>
          <Select id="mode" label="Режим" value="Нормальный" width={119} />
          <FieldLabel htmlFor="opacity" $before={10}>Непрозр.:</FieldLabel>
          <Percent id="opacity" label="Ползунок непрозрачности" />
          <BarButton $width={34} aria-label="Нажим для непрозрачности"><Icon>{targetPen}<path d="M3 8.500h6M2 11h11M3 13.500h9M5 6v9M8 5v11" strokeWidth=".6" /></Icon></BarButton>
          <Divider />
          <FieldLabel htmlFor="flow" $gap={5}>Наж.:</FieldLabel>
          <Percent id="flow" label="Ползунок нажима" />
          <BarButton $width={36} aria-label="Аэрограф"><Icon><path d="M7 4C2 3 0 14 4.500 14 7 14 9 10 11 7.500M10 4C6 5 6 9 7.500 11.500M11 14c5 1 6-4 4-6" strokeWidth="1.600" />{thinBrush}</Icon></BarButton>
          <Divider />
          <BarButton aria-label="Нажим для размера"><Icon>{targetPen}</Icon></BarButton>
          <Spacer />
          <Select id="workspace" label="Рабочая среда" value="Основная рабочая среда" width={181} />
        </OptionsBar>

        <Body>
          <Strip $width={35}>
            <StripHead><Chevrons /></StripHead>
            <GripRow $height={14}><Grip $length={18} /></GripRow>
            {toolGroups.map((g) => (
              <ToolGroup key={g.height} $height={g.height}>
                {g.tools.map(([key, name]) => (
                  <Tool key={key} aria-label={name} $active={key === "brush"}>
                    <Icon size={17}>{toolIcons[key]}</Icon>
                    {key !== "move" && key !== "zoom" && <Corner />}
                  </Tool>
                ))}
              </ToolGroup>
            ))}
            <SwapRow>
              <svg width="10" height="10" viewBox="0 0 10 10" aria-hidden="true"><path d="M4 4h5v5H4z" fill="#ddd" /><path d="M.5.5h6v6h-6z" fill="#111" stroke="#999" /></svg>
              <svg width="10" height="10" viewBox="0 0 10 10" fill="none" stroke="#c4c4c4" aria-hidden="true"><path d="M3 0 .8 2.200 3 4.400M1 2.200h4.500c1.500 0 2 .5 2 2V9M5.300 6.800 7.500 9l2.200-2.200" strokeWidth="1.200" /></svg>
            </SwapRow>
            <ToolSwatches>
              <SwatchPair $size={17} $w={26} $h={26}><button className="back" aria-label="Фоновый цвет" /><button className="front" aria-label="Основной цвет" /></SwatchPair>
            </ToolSwatches>
            <ToolGroup $height={52}>
              <Tool aria-label="Быстрая маска"><Icon size={17}><rect x="1.500" y="3" width="15" height="12" /><circle cx="9" cy="9" r="4" strokeDasharray="1.500 1" fill="#222" /></Icon></Tool>
              <Tool aria-label="Режим экрана"><Icon size={17}><rect x="6.500" y="2.500" width="10" height="8" fill="#777" /><rect x="1.500" y="7" width="10" height="7.500" fill="#777" /></Icon><Corner /></Tool>
            </ToolGroup>
          </Strip>

          <Work>
            <Stage />
            <DocWindow aria-label="Документ">
              <DocTitle>
                <DocBadge>Ps</DocBadge>
                Без имени-1 @ 50% (Слой 1, RGB/8)
                <Spacer />
                <WindowButtons>
                  <WindowButton $raised aria-label="Свернуть документ"><MinGlyph /></WindowButton>
                  <WindowButton $raised aria-label="Развернуть документ"><MaxGlyph /></WindowButton>
                  <WindowButton $raised $wide aria-label="Закрыть документ"><CloseGlyph /></WindowButton>
                </WindowButtons>
              </DocTitle>
              <DocGrid>
                <RulerCorner />
                <Ruler length={328} />
                <ScrollTrack />
                <Ruler vertical length={469} />
                <Canvas>
                  <svg width="14" height="14" viewBox="0 0 14 14" fill="none" aria-hidden="true"><circle cx="7" cy="7" r="6.500" stroke="#fff" /><circle cx="7" cy="7" r="5.500" stroke="#222" strokeWidth="1.400" /><circle cx="7" cy="7" r="2.700" stroke="#222" strokeWidth="1.300" /></svg>
                </Canvas>
                <ScrollTrack />
                <DocStatus>
                  <Zoom aria-label="Масштаб" defaultValue="50%" />
                  <StatusButton aria-label="Сведения о документе">
                    <svg width="12" height="12" viewBox="0 0 12 12" aria-hidden="true"><circle cx="6" cy="6" r="5.500" fill="#b8b8b8" /><path d="M4 3v5h4V6L6 6V3z" fill="none" stroke="#444" /></svg>
                  </StatusButton>
                  <Spacer />
                  <ResizeCorner />
                </DocStatus>
              </DocGrid>
            </DocWindow>
            <BottomTabs role="tablist">
              <Tab role="tab" aria-selected $active>Mini Bridge</Tab>
              <Tab role="tab" aria-selected={false}>Шкала времени</Tab>
              <PanelMenu aria-label="Меню панели"><MenuGlyph /></PanelMenu>
            </BottomTabs>
          </Work>

          <Strip $width={36}>
            <StripHead $end><Chevrons flip /></StripHead>
            <DockGroup $height={38}>
              <GripRow $height={9}><Grip $length={18} /></GripRow>
              <DockButton aria-label="История"><Icon><path d="M2.500 1.500h4v3.500h-4zM2.500 7h4v3.500h-4z" /><path d="M2 12h5v4.500H2z" {...F} /><path d="M9 5.500 12 2v2c4 0 5 4 3 10-.5-4-1-5.500-3-5.500v2z" {...F} /></Icon></DockButton>
            </DockGroup>
            <DockGroup $height={38}>
              <GripRow $height={9}><Grip $length={18} /></GripRow>
              <DockButton aria-label="Свойства"><Icon><path d="M1.500 4 5.500 2l4 2v4.500l-4 2-4-2zM1.500 4l4 2 4-2M5.500 6v4.500" /><path d="M12 2h4v3.500h-4zM12 7h4v3.500h-4zM1.500 12.500h15V16h-15z" {...F} /><path d="M11 14.500h4" stroke="#444" /></Icon></DockButton>
            </DockGroup>
            <DockGroup $height={65}>
              <GripRow $height={9}><Grip $length={18} /></GripRow>
              <DockButton aria-label="Наборы кистей"><Icon size={20}><path d="M5.500 11h7v6.500h-7z" {...F} /><path d="m7 11-4-6M9 11V5.500M11 11l3.500-6.500" strokeWidth="1.400" /><path d="M1 2.500 4.500 4v3zM7.800 1h2.400v5H7.800zM13 5l3-3.500.5 4-2.500 1.500z" {...F} /></Icon></DockButton>
              <DockButton aria-label="Кисти"><Icon size={20}><path d="M1 4.500c3-2.500 6-1 7-1v3c-2 0-4 1.500-7-2z" {...F} /><path d="M8 5h9M1 12.500h9" strokeWidth="1.500" /><path d="M9 11.500c3 0 4-2.500 7.500-2v7c-3 .5-4.500-3-7.500-3z" {...F} /></Icon></DockButton>
            </DockGroup>
          </Strip>

          <Panels>
            <StripHead $end><Chevrons /></StripHead>
            <Tabs items={["Цвет", "Образцы"]} active="Цвет" />
            <ColorPanel>
              <SwatchPair $size={18} $w={27} $h={27}><button className="back" aria-label="Фоновый цвет" /><button className="front" aria-label="Основной цвет" /></SwatchPair>
              <Channels>
                <ColorChannel name="R" initial={101} from="#006161" to="#ff6161" />
                <ColorChannel name="G" initial={97} from="#650065" to="#65ff65" />
                <ColorChannel name="B" initial={97} from="#656100" to="#6561ff" />
                <Spectrum><Hues /><BlackWhite /></Spectrum>
              </Channels>
            </ColorPanel>
            <PanelGap />
            <Tabs items={["Коррекция", "Стили"]} active="Стили" />
            <StylesPanel>
              <StyleGrid>
                {chips.map(([fill, hi, lo, bevel], i) => (
                  <StyleCell key={i} aria-label={`Стиль ${i + 1}`}><StyleChip $fill={fill} $hi={hi} $lo={lo} $bevel={bevel} /></StyleCell>
                ))}
              </StyleGrid>
              <ScrollStrip />
            </StylesPanel>
            <PanelFoot $gap={12}>
              <FootButton $dim aria-label="Удалить стиль"><Icon size={15}><circle cx="9" cy="9" r="5.500" /><path d="m5 5 8 8" /></Icon></FootButton>
              <FootButton $dim aria-label="Новый стиль"><Icon size={15}>{newIcon}</Icon></FootButton>
              <FootButton $dim aria-label="Корзина"><Icon size={15}>{trashIcon}</Icon></FootButton>
            </PanelFoot>
            <PanelGap />
            <Tabs items={["Слои", "Каналы", "Контуры"]} active="Слои" />
            <Row $height={24}>
              <Select id="kind" label="Фильтр слоев" value="Вид" width={88} lens />
              <FilterButtons $start={50}>
                <SmallButton $width={23} aria-label="Пиксельные слои"><Icon size={15}><rect x="2" y="3" width="14" height="12" /><path d="m3 13 4-4 3 2.500L13 8l2 5z" {...F} /><circle cx="6" cy="6.500" r="1" {...F} /></Icon></SmallButton>
                <SmallButton $width={23} aria-label="Корректирующие слои"><Icon size={15}>{circleHalf}</Icon></SmallButton>
                <SmallButton $width={23} aria-label="Текстовые слои"><Icon size={13}>{toolIcons.type}</Icon></SmallButton>
                <SmallButton $width={23} aria-label="Слои-фигуры"><Icon size={14}><path d="M4.500 4.500h9v9h-9z" /><path d="M2.500 2.500h3v3h-3zM12.500 2.500h3v3h-3zM2.500 12.500h3v3h-3zM12.500 12.500h3v3h-3z" fill="#535353" /></Icon></SmallButton>
                <SmallButton $width={23} aria-label="Смарт-объекты"><Icon size={14}><path d="M6.500 8V2.500h5l4 4v9H10M11.500 2.500v4h4" /><path d="M2 9h7v7H2z" {...F} /></Icon></SmallButton>
              </FilterButtons>
              <Spacer />
              <FilterSwitch aria-label="Включить фильтр" />
            </Row>
            <Row $height={27}>
              <Select id="blend" label="Режим наложения" value="Обычные" grow />
              <FieldLabel htmlFor="layer-opacity" $before={7} $gap={5}>Непрозрачность:</FieldLabel>
              <Percent id="layer-opacity" label="Ползунок непрозрачности слоя" />
            </Row>
            <Row $height={28}>
              <FieldLabel $gap={3}>Закрепить:</FieldLabel>
              <SmallButton $width={21} aria-label="Закрепить прозрачные пиксели"><Icon size={13}><path d="M1.500 1.500h15v15h-15z" /><path d="M2 2h5v5H2zM12 2h5v5h-5zM7 7h5v5H7zM2 12h5v5H2zM12 12h5v5h-5z" {...F} /></Icon></SmallButton>
              <SmallButton $width={21} aria-label="Закрепить цвет пикселов"><Icon size={15}>{brushShape}</Icon></SmallButton>
              <SmallButton $width={21} aria-label="Закрепить положение"><Icon size={14}><path d="M9 2v14M2 9h14M6.500 4.500 9 1.500l2.500 3M6.500 13.500l2.500 3 2.500-3M4.500 6.500 1.500 9l3 2.500M13.500 6.500l3 2.500-3 2.500" strokeWidth="1.300" /></Icon></SmallButton>
              <SmallButton $width={21} aria-label="Закрепить все"><Icon size={13}><path d="M3 8h12v9H3z" {...F} /><path d="M5.500 8V5a3.500 3.500 0 0 1 7 0v3" strokeWidth="1.800" /><path d="M9 11v3" stroke="#444" strokeWidth="1.800" /></Icon></SmallButton>
              <Spacer />
              <FieldLabel htmlFor="fill" $gap={5}>Заливка:</FieldLabel>
              <Percent id="fill" label="Ползунок заливки" />
            </Row>
            <Layers>
              <LayerList>
                <LayerRow>
                  <EyeButton aria-label="Видимость слоя"><svg width="12" height="10" viewBox="0 0 12 10" aria-hidden="true"><path d="M1 5c2.500-4 7.500-4 10 0-2.500 4-7.500 4-10 0z" fill="none" stroke="currentColor" strokeWidth="1.500" /><circle cx="6" cy="4.500" r="2" fill="currentColor" /></svg></EyeButton>
                  <LayerBody><LayerThumb />Слой 1</LayerBody>
                </LayerRow>
              </LayerList>
              <ScrollStrip />
            </Layers>
            <PanelFoot $gap={9}>
              <FootButton $dim aria-label="Связать слои"><Icon size={15}><path d="M7 6H5a3 3 0 0 0 0 6h2M11 6h2a3 3 0 0 1 0 6h-2M6 9h6" strokeWidth="1.500" /></Icon></FootButton>
              <FootButton aria-label="Стиль слоя">fx.</FootButton>
              <FootButton aria-label="Слой-маска"><Icon size={15}><path fillRule="evenodd" d="M2 3h14v12H2zM9 6a3 3 0 1 0 0 6 3 3 0 0 0 0-6z" {...F} /></Icon></FootButton>
              <FootButton aria-label="Корректирующий слой"><Icon size={15}>{circleHalf}<path d="M16 14h2v2h-2z" {...F} /></Icon></FootButton>
              <FootButton aria-label="Новая группа"><Icon size={15}><path d="M2 3h5l1.500 2H16v10H2z" {...F} /></Icon></FootButton>
              <FootButton aria-label="Новый слой"><Icon size={15}>{newIcon}</Icon></FootButton>
              <FootButton $dim aria-label="Удалить слой"><Icon size={15}>{trashIcon}</Icon></FootButton>
            </PanelFoot>
          </Panels>
        </Body>

        <Taskbar>
          {taskIcons.map((t, i) => (
            <TaskButton key={t.name} aria-label={t.name} $first={i === 0} $running={t.running} $active={t.active}>{t.art}</TaskButton>
          ))}
          <Tray>
            <TrayButton $width={20} aria-label="Скрытые значки"><svg width="12" height="8" viewBox="0 0 12 8"><path d="m1 7 5-5.500L11 7" fill="none" stroke="#fff" strokeWidth="1.400" /></svg></TrayButton>
            <TrayButton $width={24} aria-label="Громкость"><svg width="15" height="13" viewBox="0 0 15 13" fill="none" stroke="#fff"><path d="M1 4.500h2L6 1.500v10l-3-3H1zM8 4.500c1 1 1 3 0 4M10 3c2 2 2 5 0 7M12 1.500c3 3 3 7 0 10" /></svg></TrayButton>
            <TrayButton $width={23} aria-label="Avast"><svg width="16" height="16" viewBox="0 0 16 16"><path d="M1 6c0-3 3-2 4.500-3.500C8 2 11 3 12 1c2-1 3 1 2 3-1 1.500-1 3 0 5s1 5-1 5.500c-2 0-2-2-4-2s-4 2-6.500 1C1 12 3 10 3 8.500S1 8 1 6z" fill="#f47c1c" /><circle cx="8" cy="8" r="2.500" fill="#ffc47a" /></svg></TrayButton>
            <TrayButton $width={23} aria-label="Батарея"><svg width="16" height="12" viewBox="0 0 16 12" fill="none" stroke="#fff"><path d="M4.500 3.500H14v6.500H3V8" /><path d="M6 5h7v3.500H6zM14 5.500h2v3h-2z" fill="#fff" stroke="none" /><path d="M1 1h3.500v3c0 1-3.500 1-3.500 0zM2.700 5v3" /></svg></TrayButton>
            <TrayButton $width={24} aria-label="Сеть"><svg width="13" height="13" viewBox="0 0 13 13" fill="none" stroke="#fff"><path d="M1 12C1 6 6 1 12 1M4 12c0-4.500 3.500-8 8-8M7 12c0-3 2-5 5-5" opacity=".8" /><circle cx="11" cy="11" r="1.500" fill="#fff" /></svg></TrayButton>
            <TrayButton $width={31} aria-label="Язык ввода">РУС</TrayButton>
            <Clock>0:50<br />08.08.2017</Clock>
            <TrayButton $width={36} aria-label="Уведомления"><svg width="16" height="16" viewBox="0 0 16 16"><path d="M1 1.500h14v10h-4v3l-3-3H1z" fill="none" stroke="#fff" strokeWidth="1.200" /></svg></TrayButton>
            <TrayButton $width={9} aria-label="Свернуть все окна" />
            <DesktopEdge />
          </Tray>
        </Taskbar>
        <Caption>УРОКИ ОТ ЛЮБОВИ ТАРТАНОВОЙ</Caption>
      </Screen>
    </>
  );
}
